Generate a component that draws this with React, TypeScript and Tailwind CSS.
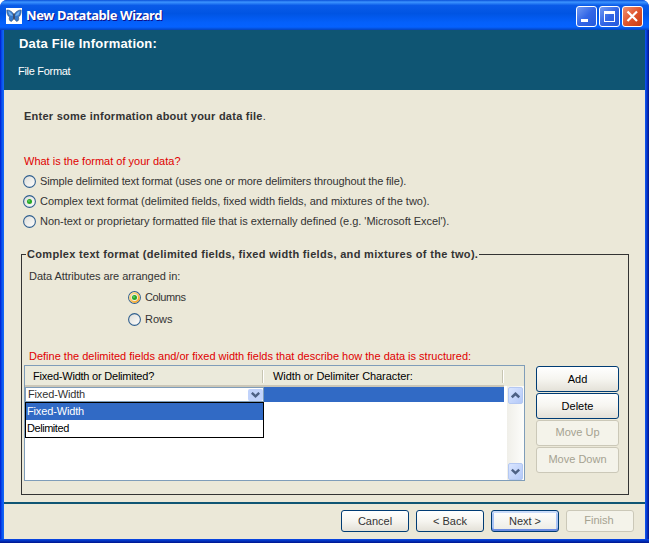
import type { ReactNode } from 'react';

function Radio({ checked = false, hot = false }: { checked?: boolean; hot?: boolean }) {
  return (
    <svg width="13" height="13" viewBox="0 0 13 13" className="shrink-0">
      <defs>
        <linearGradient id="radioFace" x1="0" y1="0" x2="1" y2="1">
          <stop offset="0" stopColor="#dcdcd7" />
          <stop offset="1" stopColor="#ffffff" />
        </linearGradient>
        <linearGradient id="radioHot" x1="0" y1="0" x2="1" y2="1">
          <stop offset="0" stopColor="#fee3a0" />
          <stop offset="1" stopColor="#f4a01c" />
        </linearGradient>
      </defs>
      <circle cx="6.5" cy="6.5" r="5.9" fill="url(#radioFace)" stroke="#31608f" strokeWidth="1.1" />
      {hot && <circle cx="6.5" cy="6.5" r="4.4" fill="none" stroke="url(#radioHot)" strokeWidth="2" />}
      {checked && <circle cx="6.5" cy="6.5" r="2.5" fill="#27a827" />}
      {checked && <circle cx="6" cy="6" r="0.9" fill="#63d063" />}
    </svg>
  );
}

function Option({ children, checked, hot, className }: { children: ReactNode; checked?: boolean; hot?: boolean; className?: string }) {
  return (
    <div className={'flex h-5 items-center gap-1 whitespace-nowrap ' + (className ?? '')}>
      <Radio checked={checked} hot={hot} />
      <span>{children}</span>
    </div>
  );
}

function Button({ children, className, disabled, focused }: { children: ReactNode; className: string; disabled?: boolean; focused?: boolean }) {
  const look = disabled
    ? 'border-[#cbc8b8] bg-[#f4f3ea] text-[#a5a291] pb-0.5'
    : focused
      ? 'border-[#003c74] bg-linear-to-b from-white to-[#ecebe4] shadow-[inset_0_2px_0_#cadbf9,inset_0_-2px_0_#6b8be2,inset_2px_0_0_#a9c3f5,inset_-2px_0_0_#a9c3f5]'
      : 'border-[#003c74] bg-linear-to-b from-white via-[#f6f5f0] to-[#e4e1d8]';
  return <button className={'flex items-center justify-center rounded-[3px] border whitespace-nowrap ' + look + ' ' + className}>{children}</button>;
}

function ScrollButton({ up = false }: { up?: boolean }) {
  return (
    <div className="flex h-[17px] w-[15px] items-center justify-center rounded-[2px] border border-[#b4c8f2] bg-linear-to-br from-[#d9e5ff] to-[#b4c9f8]">
      <svg width="9" height="7" viewBox="0 0 9 7">
        <path d={up ? 'M.8 5.3 4.5 1.8 8.2 5.3' : 'M.8 1.6 4.5 5.1 8.2 1.6'} fill="none" stroke="#4d6185" strokeWidth="2.5" />
      </svg>
    </div>
  );
}

function Caption({ kind }: { kind: 'min' | 'max' | 'close' }) {
  const color = kind === 'close' ? 'from-[#f09070] via-[#e0542c] to-[#c83c12]' : 'from-[#7299f2] via-[#3366e6] to-[#2459dd]';
  return (
    <div className={'size-[21px] rounded-[3px] border border-white bg-linear-to-br ' + color}>
      <svg width="19" height="19" viewBox="0 0 19 19">
        {kind === 'min' && <path d="M4 12h7v3H4z" fill="white" />}
        {kind === 'max' && <path d="M4 4h11v11H4zM5 7v7h9V7z" fill="white" fillRule="evenodd" />}
        {kind === 'close' && <path d="M4.5 4.5 14 14M14 4.5 4.5 14" stroke="white" strokeWidth="2.2" />}
      </svg>
    </div>
  );
}

function Butterfly() {
  return (
    <svg width="16" height="16" viewBox="0 0 16 16" className="shrink-0 bg-white">
      <path d="M.8 2C4 1.8 6.8 4 8 7 9.2 4 12 1.8 15.2 2 15.4 5 14.6 8 12.4 9 13.4 11 12.4 13.4 10.6 13.4 9.2 12.6 8.5 11 8 9.6 7.5 11 6.8 12.6 5.4 13.4 3.6 13.4 2.6 11 3.6 9 1.4 8 .6 5 .8 2Z" fill="#3579cd" stroke="#35547e" strokeWidth=".6" />
      <path d="M2 3.2C4.4 3.6 6 5.6 6.8 8L3.6 7.2ZM14 3.2C11.6 3.6 10 5.6 9.2 8l3.2-.8Z" fill="#71aeee" />
      <path d="M8 5.5v6" stroke="#3c3034" strokeWidth="1.1" />
    </svg>
  );
}

export default function App() {
  return (
    <div className="flex h-[543px] w-[649px] flex-col overflow-hidden rounded-t-[7px] bg-[#0831d9] font-['Liberation_Sans',Arial,sans-serif] text-[11px] text-[#333]">
      <header className="flex h-[30px] shrink-0 items-center bg-[linear-gradient(#0a50d8_0%,#3c94ff_7%,#0a5be8_18%,#0054e3_45%,#0460fb_75%,#0562ff_90%,#0344c0_100%)] pt-0.5 pr-[6px] pl-[6px]">
        <Butterfly />
        <h1 className="ml-1 grow whitespace-nowrap font-['Noto_Sans',sans-serif] text-[13px] font-bold tracking-[-0.42px] text-white [text-shadow:1px_1px_#0f1089]">New Datatable Wizard</h1>
        <div className="flex gap-0.5">
          <Caption kind="min" />
          <Caption kind="max" />
          <Caption kind="close" />
        </div>
      </header>
      <div className="flex grow bg-[linear-gradient(90deg,#0019cf_0,#0855f0_2px,#1668f5_4px,#1668f5_644px,#0a48e4_646px,#00138c_649px)] pr-1 pl-1">
        <main className="flex grow flex-col bg-[#ebe8d8]">
          <section className="h-[60px] bg-[#0f5573] pl-[14px] text-white">
            <h2 className="h-7 pl-px text-[13px] leading-7 font-bold">
              <span className="tracking-[0.2px]">Data File Information:</span>
            </h2>
            <p className="h-6 leading-[26px] tracking-[-0.3px]">File Format</p>
          </section>
          <section className="h-[156px] pl-5">
            <p className="pt-[18px] leading-4 font-bold">
              <span className="tracking-[0.25px]">Enter some information about your data file</span>
              <span className="font-normal">.</span>
            </p>
            <p className="mt-[29px] h-[18px] leading-4 text-[#e00000]">What is the format of your data?</p>
            <div className="-ml-px">
              <Option className="tracking-[-0.125px]">Simple delimited text format (uses one or more delimiters throughout the file).</Option>
              <Option checked className="tracking-[-0.02px]">Complex text format (delimited fields, fixed width fields, and mixtures of the two).</Option>
              <Option className="tracking-[-0.03px]">Non-text or proprietary formatted file that is externally defined (e.g. 'Microsoft Excel').</Option>
            </div>
          </section>
          <fieldset className="mr-4 ml-[17px] h-[249px] border border-[#333] pl-0.5">
            <legend className="ml-0.5 h-4 px-px leading-4 font-bold whitespace-nowrap">
              <span className="tracking-[0.315px]">Complex text format (delimited fields, fixed width fields, and mixtures of the two).</span>
            </legend>
            <p className="mt-1.5 pl-[5px] leading-4 tracking-[-0.05px]">Data Attributes are arranged in:</p>
            <div className="mt-[3px] flex flex-col gap-0.5 pl-[104px]">
              <Option checked hot className="tracking-[-0.4px]">Columns</Option>
              <Option>Rows</Option>
            </div>
            <p className="mt-[19px] h-[17px] pl-[5px] leading-4 whitespace-nowrap text-[#e00000]">Define the delimited fields and/or fixed width fields that describe how the data is structured:</p>
            <div className="flex gap-[11px]">
              <div className="flex h-[116px] w-[501px] border border-[#7f9db9] bg-white text-black">
                <div className="w-[479px]">
                  <div className="flex h-[21px] border-b-2 border-[#cbc7b8] bg-[#ebeadb]">
                    <div className="flex w-[239px] items-center pt-px pl-2">
                      <span className="grow tracking-[-0.22px]">Fixed-Width or Delimited?</span>
                      <i className="h-[13px] w-0.5 border-r border-white bg-[#c7c5b2]" />
                    </div>
                    <div className="flex w-[240px] items-center pt-px pl-[9px]">
                      <span className="grow tracking-[-0.07px]">Width or Delimiter Character:</span>
                      <i className="h-[13px] w-0.5 border-r border-white bg-[#c7c5b2]" />
                    </div>
                  </div>
                  <div className="relative flex h-[15px] bg-[#316ac5]">
                    <div className="flex w-[239px] items-center border border-[#7f9db9] bg-white pl-0.5 text-[#333]">
                      <span className="grow tracking-[-0.15px]">Fixed-Width</span>
                      <span className="flex h-[12px] w-[15px] items-center justify-center rounded-[2px] bg-[#c1d3fb]">
                        <svg width="9" height="6" viewBox="0 0 9 6"><path d="M.8 .8 4.5 4.3 8.2 .8" fill="none" stroke="#4d6185" strokeWidth="2.4" /></svg>
                      </span>
                    </div>
                    <div className="absolute top-[15px] left-0 h-9 w-[239px] border border-black bg-white">
                      <p className="h-[17px] bg-[#316ac5] pl-px leading-[17px] tracking-[-0.15px] text-white">Fixed-Width</p>
                      <p className="pl-px leading-[17px] tracking-[-0.45px]">Delimited</p>
                    </div>
                  </div>
                </div>
                <div className="w-5 bg-[#ebeadb]">
                  <div className="flex h-[114px] flex-col items-center justify-between bg-[linear-gradient(#ebeadb_20px,transparent_20px),linear-gradient(90deg,#fff_3px,#f0efe9_3px,#fdfdfb_20px)] pt-[21px] pl-[3px]">
                    <ScrollButton up />
                    <ScrollButton />
                  </div>
                </div>
              </div>
              <div className="flex flex-col gap-px pt-px text-black">
                <Button className="h-[26px] w-[83px]">Add</Button>
                <Button className="h-[26px] w-[83px]">Delete</Button>
                <Button disabled className="h-[26px] w-[83px]">Move Up</Button>
                <Button disabled className="h-[26px] w-[83px]">Move Down</Button>
              </div>
            </div>
          </fieldset>
          <footer className="mt-[7px] flex h-[37px] justify-end gap-[7px] border-t-2 border-[#0f5573] pt-1.5 pr-[11px]">
            <Button className="h-[22px] w-[68px]">Cancel</Button>
            <Button className="h-[22px] w-[68px]">&lt; Back</Button>
            <Button focused className="h-[22px] w-[68px]">Next &gt;</Button>
            <Button disabled className="h-[22px] w-[68px] pr-0.5">Finish</Button>
          </footer>
        </main>
      </div>
      <div className="h-1 shrink-0 bg-linear-to-b from-[#0b4bea] to-[#00138c]" />
    </div>
  );
}
